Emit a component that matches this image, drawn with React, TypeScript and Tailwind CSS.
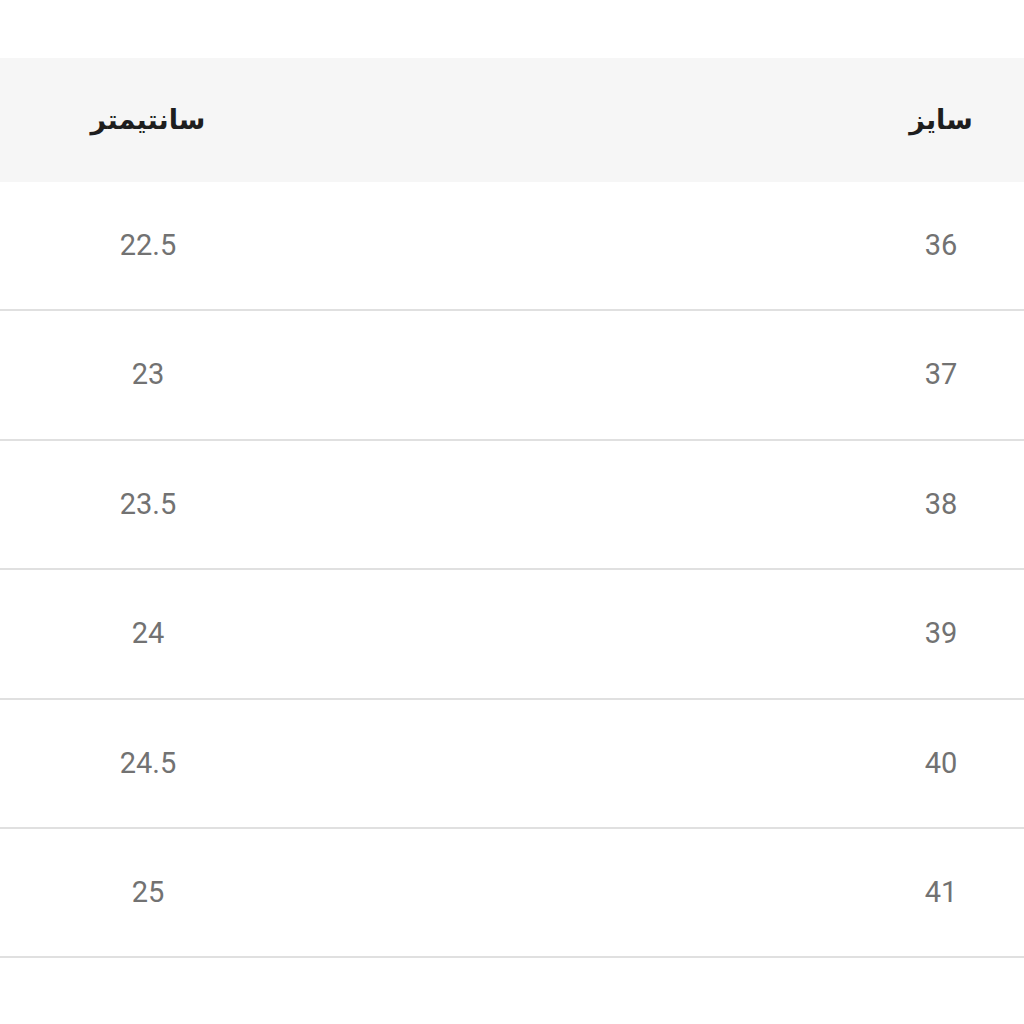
const rows = [
  ["36", "22.5"],
  ["37", "23"],
  ["38", "23.5"],
  ["39", "24"],
  ["40", "24.5"],
  ["41", "25"],
];

export default function App() {
  return (
    <div dir="rtl" className="w-full min-h-[1024px] bg-white pt-[58px]">
      <div className="flex items-center h-[124px] bg-[#f6f6f6] text-[#1e1e1e] font-bold text-[27px] font-['DejaVu_Sans',sans-serif]">
        <div className="w-[166px] text-center">سایز</div>
        <div className="flex-1" />
        <div className="w-[296px] text-center">سانتیمتر</div>
      </div>
      {rows.map(([size, cm]) => (
        <div
          key={size}
          className="flex items-center h-[129.4px] border-b-2 border-[#e0e0e0] text-[#727272] text-[29px] font-['Roboto',sans-serif]"
        >
          <div className="w-[166px] text-center">{size}</div>
          <div className="flex-1" />
          <div className="w-[296px] text-center">{cm}</div>
        </div>
      ))}
    </div>
  );
}
